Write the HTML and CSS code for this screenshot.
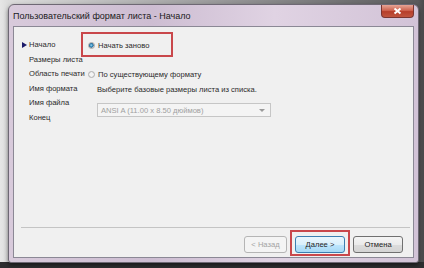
FILE: index.html
```html
<!DOCTYPE html>
<html>
  <head>
    <meta charset="utf-8">
    <title>Пользовательский формат листа</title>
    <link rel="stylesheet" href="styles.css">
  </head>
  <body>
    <div class="desktop">
      <div class="window">
        <div class="titlebar">
          <span class="title">Пользовательский формат листа - Начало</span>
          <span class="close">
            <svg width="11" height="8" viewBox="0 0 11 8">
              <path d="M2.5 1.5 L8.5 6.5 M8.5 1.5 L2.5 6.5" stroke="#fff" stroke-width="2"/>
            </svg>
          </span>
        </div>
        <div class="client">
          <div class="wizard">
            <div class="nav current">Начало</div>
            <div class="cell">
              <label class="radio marked"><span class="dot checked"></span>Начать заново</label>
            </div>
            <div class="nav">Размеры листа</div>
            <div class="cell"></div>
            <div class="nav">Область печати</div>
            <div class="cell">
              <label class="radio"><span class="dot"></span>По существующему формату</label>
            </div>
            <div class="nav">Имя формата</div>
            <div class="cell hint">Выберите базовые размеры листа из списка.</div>
            <div class="nav">Имя файла</div>
            <div class="cell top">
              <div class="select">
                <span>ANSI A (11.00 x 8.50 дюймов)</span>
                <span class="arrow"></span>
              </div>
            </div>
            <div class="nav">Конец</div>
            <div class="cell"></div>
          </div>
          <div class="footer">
            <button class="btn disabled">&lt; Назад</button>
            <button class="btn primary marked">Далее &gt;</button>
            <button class="btn">Отмена</button>
          </div>
        </div>
      </div>
    </div>
  </body>
</html>
```

FILE: styles.css
```css
* {
  box-sizing: border-box;
}

body {
  margin: 0;
  font-family: "Liberation Sans", Arial, sans-serif;
  font-size: 7.6px;
  color: #2a2a2a;
}

.desktop {
  width: 424px;
  height: 268px;
  padding: 4px 5px 5px 8px;
  background:
    linear-gradient(to bottom, transparent 262px, #2e2e30 262px),
    linear-gradient(to right, #e6e6e6 0, #dcdcdc 8px, #5a5a5c 418px, #4a4a4c 424px);
}

.window {
  height: 259px;
  padding: 0 4px 4px 4px;
  border: 1px solid #6e6874;
  border-radius: 6px 6px 3px 3px;
  background: linear-gradient(to right, #d8cadb, #cdbdd2 35%, #e0d3e3 65%, #d2c3d7);
  display: flex;
  flex-direction: column;
  box-shadow: 0 2px 4px rgba(0, 0, 0, 0.5);
}

.titlebar {
  height: 21px;
  display: flex;
  align-items: flex-start;
  justify-content: space-between;
}

.title {
  padding-top: 6px;
  font-size: 9px;
  color: #1a1a1a;
}

.close {
  width: 33px;
  height: 13px;
  margin-right: 0;
  border: 1px solid #7a3530;
  border-top: none;
  border-radius: 0 0 4px 4px;
  background: linear-gradient(to bottom, #e6a596, #cf6450 45%, #b63e2a 55%, #c0553f);
  display: flex;
  align-items: center;
  justify-content: center;
}

.client {
  flex: 1;
  background: #f0f0f0;
  border: 1px solid #8b8895;
  display: flex;
  flex-direction: column;
}

.wizard {
  flex: 1;
  display: grid;
  grid-template-columns: 59px 1fr;
  grid-auto-rows: 14.6px;
  padding: 11px 0 0 15px;
}

.nav {
  line-height: 14.6px;
  white-space: nowrap;
  position: relative;
}

.nav.current::before {
  content: "";
  position: absolute;
  left: -7px;
  top: 4px;
  border-left: 5px solid #1c1a6a;
  border-top: 3px solid transparent;
  border-bottom: 3px solid transparent;
}

.cell {
  display: flex;
  align-items: center;
  white-space: nowrap;
}

.cell.top {
  align-items: flex-start;
}

.hint {
  padding-left: 9px;
}

.radio {
  display: flex;
  align-items: center;
  gap: 3px;
  position: relative;
}

.dot {
  width: 7px;
  height: 7px;
  border-radius: 50%;
  border: 1px solid #b0b0b0;
  background: radial-gradient(circle, #f4f4f4 40%, #dcdcdc);
}

.dot.checked {
  border-color: #a8a8a8;
  background: radial-gradient(circle at 45% 45%, #9fd4f0 0, #2f86b8 40%, #2a6590 55%, #e2e2e2 70%);
}

.radio.marked::after {
  content: "";
  position: absolute;
  left: -7px;
  top: -9px;
  width: 88px;
  height: 21px;
  border: 2px solid #c9474b;
}

.select {
  width: 174px;
  height: 14px;
  margin: 7px 0 0 9px;
  padding: 0 0 0 3px;
  border: 1px solid #c6c6c6;
  background: #f4f4f4;
  color: #a0a0a0;
  display: flex;
  align-items: center;
  justify-content: space-between;
}

.arrow {
  margin-right: 5px;
  border-top: 3px solid #9a9a9a;
  border-left: 3px solid transparent;
  border-right: 3px solid transparent;
}

.footer {
  height: 30px;
  margin: 0 3px 0 7px;
  border-top: 1px solid #c4c4c4;
  display: flex;
  justify-content: flex-end;
  align-items: flex-start;
  gap: 8px;
  padding: 8px 7px 0 0;
}

.btn {
  width: 50px;
  height: 17px;
  padding: 0;
  font-family: inherit;
  font-size: 7.6px;
  color: #222;
  border: 1px solid #707070;
  border-radius: 3px;
  background: linear-gradient(to bottom, #f4f4f4, #ebebeb 50%, #dcdcdc 51%, #d4d4d4);
  position: relative;
}

.btn.disabled {
  width: 43px;
  color: #a3a3a3;
  border-color: #b5b5b5;
  background: #f4f4f4;
}

.btn.primary {
  border-color: #3c7fb1;
  background: linear-gradient(to bottom, #eaf6fd, #d9f0fc 50%, #bee6fd 51%, #a7d9f5);
}

.btn.marked::after {
  content: "";
  position: absolute;
  left: -6px;
  top: -7px;
  right: -6px;
  bottom: -4px;
  border: 2px solid #c9474b;
}
```
